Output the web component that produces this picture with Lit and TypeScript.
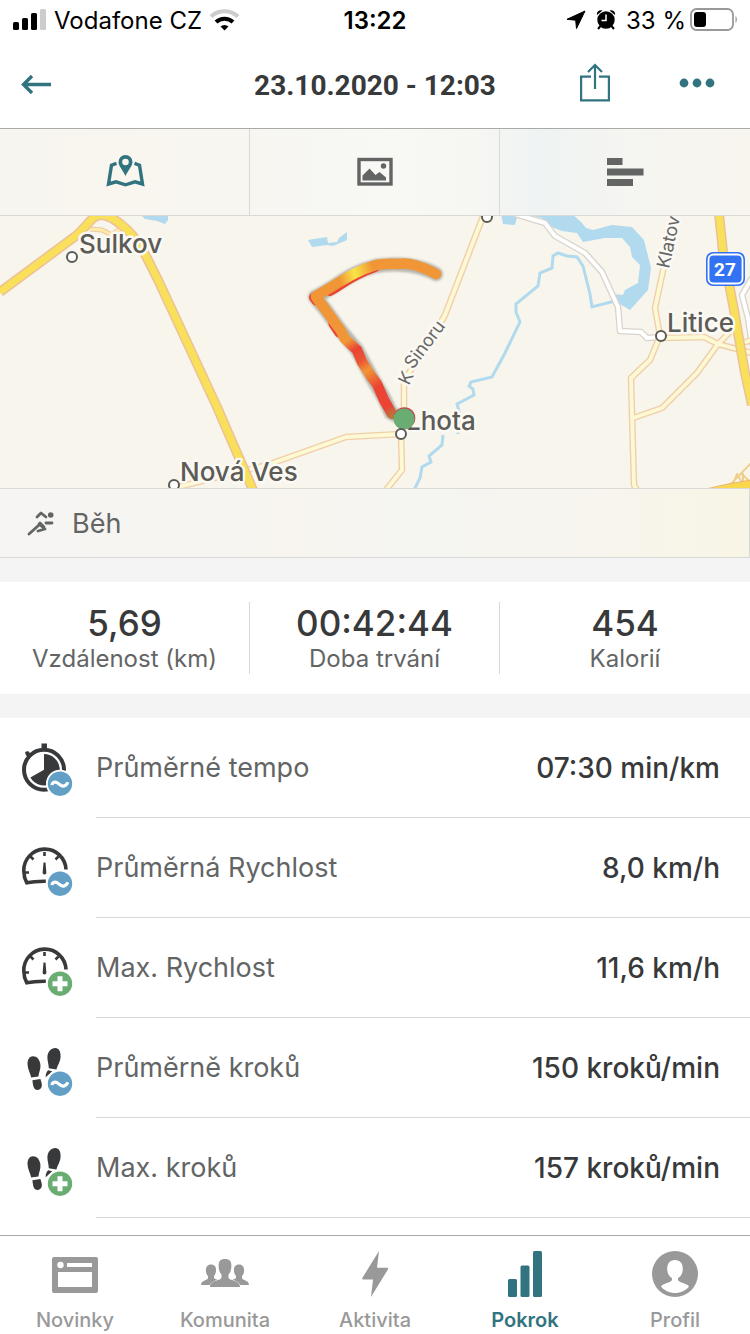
import { LitElement, html, svg, css } from "lit";
import { customElement, property, state } from "lit/decorators.js";

const wave = svg`
  <circle cx="60" cy="65.700" r="14" fill="#fff"/>
  <circle cx="60" cy="65.700" r="12.200" fill="#619fc4"/>
  <path d="M52 67.200c.3-3.400 3.600-4 6.200-1.800l1.800 1.400c2.600 2.100 6.200 1.600 7.800-2.600" fill="none" stroke="#fff" stroke-width="3.200"/>`;

const plus = svg`
  <circle cx="60" cy="65.700" r="14" fill="#fff"/>
  <circle cx="60" cy="65.700" r="12.200" fill="#69ad73"/>
  <path d="M60 58.200v15M52.500 65.700h15" fill="none" stroke="#fff" stroke-width="5"/>`;

const stopwatch = svg`
  <circle cx="44" cy="51.700" r="20" fill="none" stroke="#37393a" stroke-width="4"/>
  <path d="M41.500 25.500h5.500v6h-5.500zM25 34l3-1 3.500 3.500-2.500 2.500-3-1.500z" fill="#37393a"/>
  <path d="M44 51.700V36a15.700 15.700 0 1 1-13.600 23.500z" fill="#37393a"/>`;

const gauge = svg`
  <path d="M66 51.500A21 21 0 0 0 23.800 53c0 5 1.200 8.500 3 11.800 6-1.400 11-1.700 19-1.600" fill="none" stroke="#37393a" stroke-width="3.600"/>
  <path d="M44.500 34v4M30.500 38.500l3 3M58.500 38.500l-3 3M25 54.500h4" fill="none" stroke="#37393a" stroke-width="2.600"/>
  <path d="M43.500 44.500h2l.8 9.500a1.900 1.900 0 1 1-3.600 0z" fill="#37393a"/>`;

const steps = svg`
  <g fill="#37393a">
    <path d="M33 38.200c4 0 6.800 3.500 7.400 8.300.500 4.500-1.400 7.500-2 12l-7.200 1c-.8-4.500-3.700-8.500-3.700-13.500 0-4.500 2-7.800 5.500-7.800z"/>
    <path d="M32.400 62.200l8-1.300c.8 3 1.900 5 1.300 7.500-.6 2.200-2.200 3.500-4.300 3.500-3.600 0-4.400-3.800-5-9.700z"/>
    <path d="M55.300 30c3.600 0 5.500 3.500 5.300 8.500-.2 5.500-3 8.500-4.200 13l-7.600-1.300c0-4-1.400-6.700-1.400-10.700 0-5.500 3.600-9.500 7.900-9.500z"/>
    <path d="M48.200 52.200l4 1-6.500 6c-.2-3 .8-5.500 2.500-7z"/>
  </g>`;

const metricIcons: Record<string, unknown> = { stopwatch, gauge, steps };

@customElement("status-bar")
class StatusBar extends LitElement {
  static styles = css`
    :host {
      display: grid;
      grid-template-columns: 1fr auto 1fr;
      align-items: center;
      height: 40px;
      padding: 0 12px;
      font-size: 24px;
      color: #000;
    }
    .side { display: flex; align-items: center; gap: 8px; }
    .right { justify-content: flex-end; gap: 10px; }
    .power { display: flex; align-items: center; gap: 4px; }
    .time { font-weight: 600; }
    svg { display: block; flex: none; }
  `;
  render() {
    return html`
      <div class="side">
        <svg width="34" height="22" viewBox="12 9 34 22" aria-hidden="true">
          <rect x="13" y="22" width="6" height="8" rx="1.500"/>
          <rect x="22" y="18" width="6" height="12" rx="1.500"/>
          <rect x="31" y="13" width="6" height="17" rx="1.500"/>
          <rect x="40" y="9" width="6" height="21" rx="1.500" fill="#ccc"/>
        </svg>
        <span>Vodafone CZ</span>
        <svg width="30" height="22" viewBox="211 9 30 22" aria-hidden="true" fill="none">
          <path d="M212 16.500a20 20 0 0 1 27 0" stroke="#ccc" stroke-width="4"/>
          <path d="M217 22a12.500 12.500 0 0 1 17 0" stroke="#000" stroke-width="4"/>
          <path d="M225.500 30.500l-4-4a5.800 5.800 0 0 1 8 0z" fill="#000"/>
        </svg>
      </div>
      <span class="time">13:22</span>
      <div class="side right">
        <svg width="20" height="20" viewBox="569 11 20 20" aria-hidden="true"><path d="M588 12l-8.500 17.500-.8-8.300-8.700-.9z" stroke="#000" stroke-linejoin="round"/></svg>
        <svg width="20" height="20" viewBox="598 10 20 20" aria-hidden="true">
          <path d="M602.500 26l-2.500 3M613.500 26l2.500 3" stroke="#000" stroke-width="2"/>
          <path d="M599 15a4 4 0 0 1 5.500-4.500zM617 15a4 4 0 0 0-5.500-4.500z"/>
          <circle cx="608" cy="20" r="8.700"/>
          <path d="M608 14.500v6h-4.500" fill="none" stroke="#fff" stroke-width="1.500"/>
        </svg>
        <div class="power">
          <span>33 %</span>
          <svg width="48" height="24" viewBox="691 8 48 24" aria-hidden="true">
            <rect x="692" y="9" width="42" height="21" rx="5.500" fill="#fff" stroke="#999" stroke-width="1.800"/>
            <rect x="695" y="12" width="12" height="15" rx="3"/>
            <path d="M736.500 16c1.800.8 1.800 6.200 0 7z" fill="#999"/>
          </svg>
        </div>
      </div>`;
  }
}

@customElement("route-map")
class RouteMap extends LitElement {
  static styles = css`
    :host { display: block; background: #f8f5ec; }
    .canvas { display: block; width: 100%; height: 272px; font-family: Inter, "Liberation Sans", sans-serif; }
    .place { font-size: 26px; font-weight: 500; fill: #5c5b57; stroke: #fbf9f3; stroke-width: 5px; stroke-linejoin: round; paint-order: stroke; }
    .street { font-size: 18px; fill: #666; stroke: #fbf9f3; stroke-width: 5px; stroke-linejoin: round; paint-order: stroke; }
    .shield { font: 700 19px Roboto, "Liberation Sans", sans-serif; fill: #fff; text-anchor: middle; }
  `;
  render() {
    const highways = ["M0 292L77 235C88 225 92 215 102 215C114 216 128 230 133 236L146 256L158 280L172 310L217 407L230 437L253 490", "M719 214L723 252L734 310L745 373L752 405"];
    const lanes = [
      "M487 206L445 315L425 350L404 380L404 415L401 434L402 470L386 490",
      "M401 434L346 437L267 465L178 487",
      "M664 266L655 308L660 336L650 360L631 378L634 485L638 492",
      "M633 418L662 408L697 373L718 344L730 332",
      "M661 338L704 337L718 344L737 349L752 353M742 343L752 340",
    ];
    return html`
      <svg class="canvas" viewBox="0 216 750 272" preserveAspectRatio="xMidYMid slice" role="img" aria-label="Mapa trasy">
        <defs>
          <linearGradient id="leg1" gradientUnits="userSpaceOnUse" x1="316" y1="297" x2="436" y2="263">
            <stop offset=".22" stop-color="#f09636"/><stop offset=".35" stop-color="#f8e648"/>
            <stop offset=".5" stop-color="#f09636"/>
          </linearGradient>
          <linearGradient id="leg2" gradientUnits="userSpaceOnUse" x1="316" y1="297" x2="392" y2="417">
            <stop offset=".38" stop-color="#f09636"/><stop offset=".46" stop-color="#eb4334"/>
            <stop offset=".55" stop-color="#eb5534"/><stop offset=".63" stop-color="#f09636"/>
            <stop offset=".77" stop-color="#eb4334"/><stop offset=".92" stop-color="#eb4334"/>
            <stop offset="1" stop-color="#b87a3c"/>
          </linearGradient>
          <filter id="soft"><feGaussianBlur stdDeviation="1.200"/></filter>
        </defs>
        <g fill="#b1daee">
          <path d="M142 216h26v4l-3 4-8-3-12-2zM308 240l19-3 1 6 9-1 2-4 8-6v8l-14 6-6-1-15 2zM501 214h17l-3 11-12-1z"/>
          <path d="M524 214h48l9 8 5 6 7 2 19-5 20 2 12 13 7 28-3 22-18 20-12-7-6-9 11 1 2-5 13-7 2-18-8-8-2-10-8-9h-17l-22 4-6-9-15-2-10-4-10-9z"/>
        </g>
        <path d="M615 301l-23 6-2-13-7-28-6-9-10-1-9-3-5 3-1 12-12 5-2 13-22 18 0 8 4 10-15 31-13 24-21 5-2 4 4 3 1 6-17 9 2 7-1 23M443 435l-1 10-13 11 2 6-9 5-2 11-6 12" fill="none" stroke="#b1daee" stroke-width="3"/>
        <g fill="none" stroke-linejoin="round">
          <path d="M90 229l12 1 10 5 9-7-9-7" stroke="#efc9a4" stroke-width="5"/>
          <path d="M90 229l12 1 10 5 9-7-9-7" stroke="#fdeca8" stroke-width="3"/>
          ${["M515 214L545 223L555 236L585 253L602 272L618 307L620 331L641 332L647 338L661 337", "M752 278L742 295L748 318L752 345"].map(
            (d) => svg`<path d=${d} stroke="#d9d4cb" stroke-width="6.600"/><path d=${d} stroke="#fff" stroke-width="4"/>`
          )}
          ${lanes.map((d) => svg`<path d=${d} stroke="#f1cfaa" stroke-width="6.600"/>`)}
          ${lanes.map((d) => svg`<path d=${d} stroke="#fdf9d5" stroke-width="3.800"/>`)}
          <path d="M728 487l24-25M733 484l4-10 6 10 0-11M742 474l8 8" stroke="#f1cf8a" stroke-width="2"/>
          ${highways.map((d) => svg`<path d=${d} stroke="#edc097" stroke-width="10"/>`)}
          ${highways.map((d) => svg`<path d=${d} stroke="#f9e05b" stroke-width="7"/>`)}
        </g>
        <path d="M706 489l22-5 23-4v9z" fill="#f9d84e" stroke="#edb377"/>
        <g fill="none" stroke-linecap="round" stroke-linejoin="round">
          <path d="M436 274C422 266 400 262 376 266C350 272 336 287 315 297L325 309L341 331L357 350L371 376L384 398L391 413L404 419" stroke="#8c8a84" stroke-width="14" opacity=".6" filter="url(#soft)"/>
          <path d="M375 267C354 274 342 284 330 291" stroke="#eb4334" stroke-width="10"/>
          <path d="M313.500 297.500L316 301M333 324L339 333" stroke="#eb4334" stroke-width="9"/>
          <path d="M316 297L325 309L341 331L345 339L357 350L362 362L371 376L377 384L384 400L392 414" stroke="url(#leg2)" stroke-width="10.500"/>
          <path d="M436 274C422 266 407 262 400 264C390 263 385 264 376 265C352 272 338 284 316 296" stroke="url(#leg1)" stroke-width="10.500"/>
        </g>
        <g fill="#fff" stroke="#5c5b57" stroke-width="2">
          <circle cx="72" cy="257" r="5"/><circle cx="487" cy="217" r="5"/>
          <circle cx="661" cy="336" r="5"/><circle cx="174" cy="485" r="5"/>
        </g>
        <text class="place" x="79" y="253">Sulkov</text>
        <text class="place" x="667" y="332">Litice</text>
        <text class="place" x="406" y="430">Lhota</text>
        <text class="place" x="180" y="481">Nová Ves</text>
        <text class="street" transform="translate(409 386) rotate(-65)">K</text>
        <text class="street" transform="translate(413 370) rotate(-53)">Sinoru</text>
        <text class="street" transform="translate(669 269) rotate(-78)">Klatov</text>
        <circle cx="404.500" cy="418" r="10.800" fill="#bd4a48"/>
        <circle cx="404" cy="419" r="10.500" fill="#69ad73"/>
        <circle cx="401" cy="434" r="5" fill="#fff" stroke="#5c5b57" stroke-width="2"/>
        <rect x="706" y="252" width="39" height="34" rx="7" fill="#3373f3"/>
        <rect x="708.500" y="254.500" width="34" height="29" rx="5" fill="#3373f3" stroke="#fff" stroke-width="1.800"/>
        <text class="shield" x="725" y="276">27</text>
      </svg>`;
  }
}

@customElement("metric-row")
class MetricRow extends LitElement {
  @property() icon = "gauge";
  @property() badge = "wave";
  @property() label = "";
  @property() value = "";
  static styles = css`
    :host { display: flex; gap: 20px; height: 100px; padding-left: 20px; }
    svg { display: block; flex: none; align-self: center; }
    .body {
      flex: 1;
      display: flex;
      align-items: center;
      justify-content: space-between;
      gap: 16px;
      padding-right: 30px;
      border-bottom: 1px solid #d8d8d8;
      font-size: 27px;
      color: #636565;
    }
    .value { font-size: 28px; font-weight: 500; color: #37393a; white-space: nowrap; }
  `;
  render() {
    return html`
      <svg width="56" height="56" viewBox="20 22 56 56" aria-hidden="true">
        ${metricIcons[this.icon]}${this.badge === "wave" ? wave : plus}
      </svg>
      <div class="body"><span>${this.label}</span><span class="value">${this.value}</span></div>`;
  }
}

@customElement("app-root")
class AppRoot extends LitElement {
  @state() private tab = "map";

  static styles = css`
    :host {
      display: flex;
      flex-direction: column;
      min-height: 100vh;
      background: #fff;
      color: #37393a;
      font-family: Inter, "Liberation Sans", sans-serif;
    }
    * { box-sizing: border-box; }
    svg { display: block; flex: none; }
    button { border: 0; padding: 0; background: none; color: inherit; font: inherit; cursor: pointer; }
    .bar {
      display: grid;
      grid-template-columns: 1fr auto 1fr;
      align-items: center;
      height: 89px;
      padding: 0 20px;
      border-bottom: 1px solid #a9aba6;
      color: #31747f;
    }
    .title { margin: 0; padding-top: 4px; font: 700 28px/32px Roboto, "Liberation Sans", sans-serif; color: #37393a; }
    .back { justify-self: start; }
    .actions { display: flex; justify-content: flex-end; align-items: center; gap: 66px; padding-right: 14px; }
    .tabs {
      display: grid;
      grid-template-columns: repeat(3, 1fr);
      height: 87px;
      border-bottom: 1px solid #d9d9d5;
      background: linear-gradient(90deg, #f7f5ef, #f9f6ef 18%, #f7f6f1 32%, #f8f8f4 52%, #f6f6f3 64%, #eff3f3 72%, #f5f5f1 84%, #f8f5ee);
      color: #636565;
    }
    .tab { display: flex; align-items: center; justify-content: center; border-right: 1px solid #d9d9d5; }
    .tab:last-child { border-right: 0; }
    .tab[aria-selected="true"] { color: #31747f; }
    .sport {
      display: flex;
      align-items: center;
      gap: 16px;
      height: 70px;
      padding-left: 26px;
      border: 1px solid #d9d9d5;
      border-left: 0;
      background: linear-gradient(90deg, #f6f5f3, #f6f5f1 32%, #f8f5ef 38%, #f5f5f2 55%, #f7f5ee 78%, #f8f5e6);
      color: #636565;
      font-size: 27px;
    }
    .band { background: #f4f4f4; padding: 24px 0; }
    .stats { display: grid; grid-template-columns: repeat(3, 1fr); margin: 0; padding: 20px 0; background: #fff; }
    .stat { display: flex; flex-direction: column-reverse; justify-content: center; height: 72px; text-align: center; border-right: 1px solid #d8d8d8; }
    .stat:last-child { border-right: 0; }
    .stat dd { margin: 0; font-size: 35px; line-height: 42px; font-weight: 500; }
    .stat dt { font-size: 24px; line-height: 30px; color: #636565; }
    .content { flex: 1; }
    .nav {
      position: sticky;
      bottom: 0;
      display: grid;
      grid-template-columns: repeat(5, 1fr);
      height: 99px;
      border-top: 1px solid #a9a9a9;
      background: #fff;
    }
    .nav a {
      display: flex;
      flex-direction: column;
      align-items: center;
      gap: 10px;
      padding-top: 14px;
      color: #999;
      text-decoration: none;
      font-size: 20px;
      line-height: 24px;
      font-weight: 500;
    }
    .nav a.current { color: #31747f; font-weight: 600; }
  `;

  private tabButton(id: string, label: string, icon: unknown) {
    return html`<button class="tab" role="tab" aria-label=${label} aria-selected=${this.tab === id ? "true" : "false"} @click=${() => (this.tab = id)}>
      <svg width="44" height="36" viewBox="0 0 44 36" fill="currentColor" aria-hidden="true">${icon}</svg>
    </button>`;
  }

  private navLink(label: string, icon: unknown, current = false) {
    return html`<a href="#${label.toLowerCase()}" class=${current ? "current" : ""}>
      <svg width="50" height="48" viewBox="0 0 50 48" fill="currentColor" aria-hidden="true">${icon}</svg>${label}</a>`;
  }

  render() {
    return html`
      <status-bar></status-bar>
      <header class="bar">
        <button class="back" aria-label="Zpět">
          <svg width="32" height="24" viewBox="20 72 32 24" fill="none" stroke="currentColor" stroke-width="3.400"><path d="M23 84.500h28M32 76l-8.500 8.500 8.500 8.500"/></svg>
        </button>
        <h1 class="title">23.10.2020 - 12:03</h1>
        <div class="actions">
          <button aria-label="Sdílet">
            <svg width="34" height="42" viewBox="578 63 34 42" fill="none" stroke="currentColor" stroke-width="2.200"><path d="M591 76.600h-9.900v23.800h27.800V76.600H599M595 89V65M588 72l7-7 7 7"/></svg>
          </button>
          <button aria-label="Další">
            <svg width="38" height="16" viewBox="678 76 38 16" fill="currentColor"><circle cx="684" cy="83" r="4.400"/><circle cx="697" cy="83" r="4.400"/><circle cx="710" cy="83" r="4.400"/></svg>
          </button>
        </div>
      </header>
      <main class="content">
        <div class="tabs" role="tablist">
          ${this.tabButton("map", "Mapa", svg`
            <path d="M22.500 1a7 7 0 0 1 7 7c0 4-4 7.500-7 14-3-6.500-7-10-7-14a7 7 0 0 1 7-7zm0 3.700a3.300 3.300 0 1 0 0 6.600 3.300 3.300 0 0 0 0-6.600z" fill-rule="evenodd"/>
            <path d="M13.500 9.400L8.500 11.200L5.500 30L13 27.800L22.500 30.800L32 27.800L39.500 30L36.500 11.200L31.500 9.400" fill="none" stroke="currentColor" stroke-width="3.400"/>`)}
          ${this.tabButton("photos", "Fotky", svg`
            <rect x="6" y="5.500" width="32" height="24.500" fill="none" stroke="currentColor" stroke-width="3.400"/>
            <path d="M9.500 26.500v-5l7-7 6 6.500 4-3 6.500 5.500v3z"/><circle cx="30.500" cy="12" r="2.700"/>`)}
          ${this.tabButton("laps", "Úseky", svg`<path d="M4 4h15.500v7H4zM4 14.500h36.500v7H4zM4 25h26v7H4z"/>`)}
        </div>
        <route-map></route-map>
        <div class="sport">
          <svg width="30" height="30" viewBox="26 510 30 30" fill="none" stroke="#636565" stroke-width="2.800" stroke-linecap="round" stroke-linejoin="round" aria-hidden="true">
            <path d="M37 519l4-4 5 4M46 525h6M29 536l10-9M39 526l6 5-7 2M40 525l4 4"/><circle cx="50.700" cy="517" r="1.400"/>
          </svg>
          <span>Běh</span>
        </div>
        <div class="band">
          <dl class="stats">
            <div class="stat"><dt>Vzdálenost (km)</dt><dd>5,69</dd></div>
            <div class="stat"><dt>Doba trvání</dt><dd>00:42:44</dd></div>
            <div class="stat"><dt>Kalorií</dt><dd>454</dd></div>
          </dl>
        </div>
        <metric-row icon="stopwatch" badge="wave" label="Průměrné tempo" value="07:30 min/km"></metric-row>
        <metric-row icon="gauge" badge="wave" label="Průměrná Rychlost" value="8,0 km/h"></metric-row>
        <metric-row icon="gauge" badge="plus" label="Max. Rychlost" value="11,6 km/h"></metric-row>
        <metric-row icon="steps" badge="wave" label="Průměrně kroků" value="150 kroků/min"></metric-row>
        <metric-row icon="steps" badge="plus" label="Max. kroků" value="157 kroků/min"></metric-row>
      </main>
      <nav class="nav" aria-label="Hlavní">
        ${this.navLink("Novinky", svg`<path fill-rule="evenodd" d="M4 7h42a2 2 0 0 1 2 2v32a2 2 0 0 1-2 2H4a2 2 0 0 1-2-2V9a2 2 0 0 1 2-2zM8 22v15h34V22zM17 13v4h25v-4zM10.500 11.800a3.200 3.200 0 1 0 0 6.400 3.200 3.200 0 0 0 0-6.400z"/>`)}
        ${this.navLink("Komunita", svg`
          <path d="M11 14.500c4 0 5.300 2.800 5 6.500-.2 2.600-1.200 4-2 5v1.700c0 1.300 4 1.600 4.500 3.300-4 1-6 2-8 4H1c0-5 6.500-4.500 7-6.800V26c-1-1-2-2.500-2.100-5-.2-3.700 1.300-6.500 5.100-6.500zM39 14.500c-4 0-5.300 2.800-5 6.500.2 2.600 1.200 4 2 5v1.700c0 1.300-4 1.600-4.500 3.300 4 1 6 2 8 4H49c0-5-6.500-4.500-7-6.800V26c1-1 2-2.500 2.100-5 .2-3.700-1.300-6.500-5.100-6.500z"/>
          <path stroke="#fff" stroke-width="1.200" paint-order="stroke" d="M25 9c5 0 6.700 2.500 6.300 8-.2 4-1.500 6-2.800 7.500v3c0 3.500 11.500 2 11.500 9.500H10c0-7.500 11.500-6 11.500-9.500v-3c-1.300-1.500-2.600-3.500-2.800-7.500-.4-5.500 1.300-8 6.300-8z"/>`)}
        ${this.navLink("Aktivita", svg`<path d="M29 1L27 17.800h10.500q1 .5.500 1.500L21 47l2-17.500H12.700q-.8-.5-.4-1.500z"/>`)}
        ${this.navLink("Pokrok", svg`<rect x="8" y="29" width="9" height="18" rx="1.500"/><rect x="20.500" y="15.500" width="9" height="31.500" rx="1.500"/><rect x="33" y="1" width="9" height="46" rx="1.500"/>`, true)}
        ${this.navLink("Profil", svg`<path fill-rule="evenodd" d="M25 1a23 23 0 1 1 0 46 23 23 0 0 1 0-46zm0 9c-5.500 0-7.800 3.500-7.800 9 0 4.500 2 7.500 4.800 9.300V30c-1.300 3-8.800 3-11 6.500 3 4 8.500 6.500 14 6.500s11-2.500 14-6.500C36.800 33 29.300 33 28 30v-1.700c2.800-1.800 4.800-4.800 4.800-9.300 0-5.500-2.300-9-7.800-9z"/>`)}
      </nav>`;
  }
}
